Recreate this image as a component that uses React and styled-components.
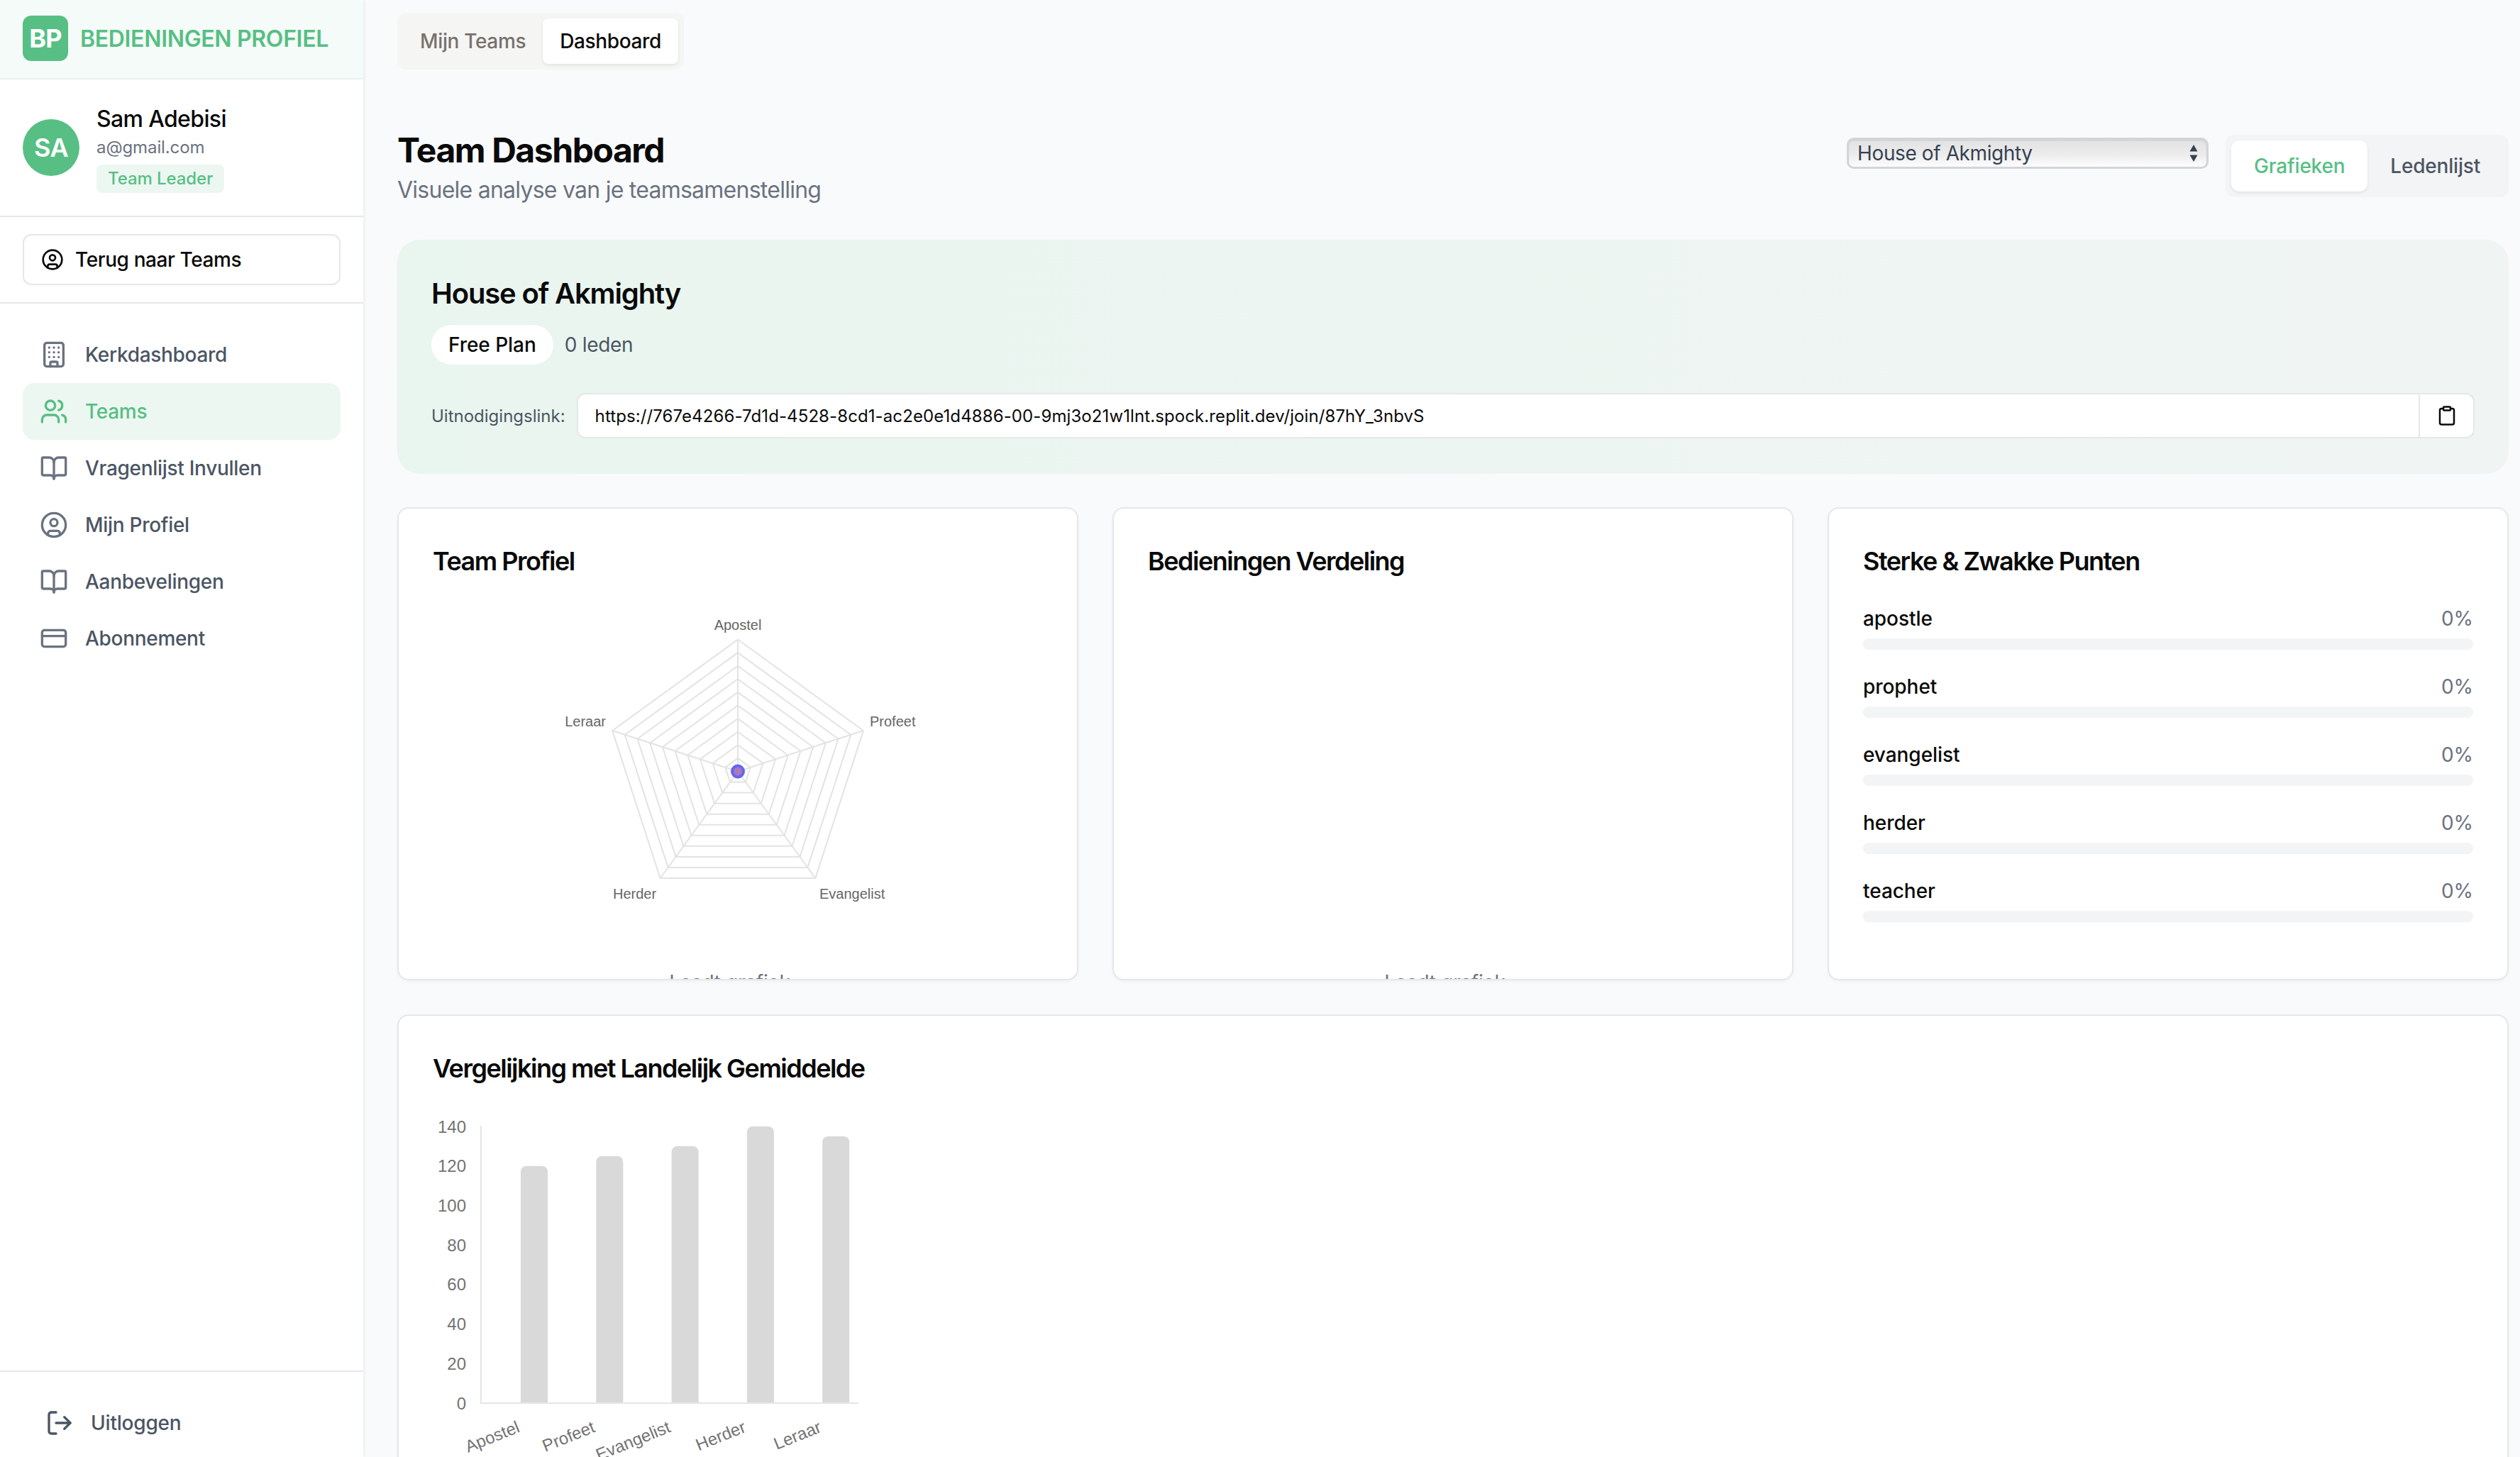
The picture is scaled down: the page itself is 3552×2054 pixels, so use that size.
import React from "react";
import styled, { createGlobalStyle } from "styled-components";
import { Building, Users, BookOpen, CircleUser, CreditCard, LogOut, Clipboard } from "lucide-react";

const Global = createGlobalStyle`
  html, body { margin: 0; padding: 0; height: 100%; }
  body { font-family: Inter, "Noto Sans", sans-serif; background: #f9fafb; color: #0a0a0a; overflow: hidden; }
  * { box-sizing: border-box; }
`;

const Shell = styled.div`display: flex; height: 100vh; overflow: hidden; background: #f9fafb;`;
const Sidebar = styled.aside`
  width: 512px; flex: none; height: 100%; display: flex; flex-direction: column; background: #fff;
  box-shadow: 2px 0 4px rgba(0,0,0,.05); position: relative; z-index: 1;
`;
const Brand = styled.div`
  height: 112px; flex: none; display: flex; align-items: center; gap: 17px; padding: 0 32px 2px;
  background: #f5fbf8; border-bottom: 2px solid #eceeef;
`;
const BrandMark = styled.div`
  width: 64px; height: 64px; border-radius: 12px; background: #57bf84; color: #fff;
  display: flex; align-items: center; justify-content: center; font-size: 36px; font-weight: 700;
  letter-spacing: -0.8px;
`;
const BrandName = styled.div`color: #57bf84; font-size: 32px; font-weight: 600; white-space: nowrap; letter-spacing: -0.33px;`;
const UserBlock = styled.div`
  display: flex; align-items: center; gap: 24px; padding: 32px; border-bottom: 2px solid #e5e7eb;
`;
const Avatar = styled.div`
  width: 80px; height: 80px; border-radius: 50%; background: #57bf84; color: #fff; flex: none;
  display: flex; align-items: center; justify-content: center; font-size: 36px; font-weight: 600; letter-spacing: -0.5px;
`;
const UserInfo = styled.div`display: flex; flex-direction: column; align-items: flex-start;`;
const UserName = styled.div`font-size: 32px; line-height: 48px; font-weight: 450; letter-spacing: -0.65px;`;
const UserMail = styled.div`font-size: 24px; line-height: 32px; color: #6b7280; letter-spacing: -0.1px;`;
const RoleBadge = styled.div`
  margin-top: 8px; height: 40px; padding: 0 16px; border-radius: 8px; background: #edf7f2; color: #57bf84;
  font-size: 24px; line-height: 40px; font-weight: 450; letter-spacing: -0.1px;
`;
const BackWrap = styled.div`padding: 24px 32px; border-bottom: 2px solid #e5e7eb;`;
const BackButton = styled.button`
  width: 100%; height: 72px; padding: 0 24px; display: flex; align-items: center; gap: 16px;
  background: #fff; border: 2px solid #e5e7eb; border-radius: 12px; color: #0a0a0a;
  font: 500 28px Inter, sans-serif; letter-spacing: -0.4px;
`;
const Nav = styled.nav`flex: 1; display: flex; flex-direction: column; padding: 32px 32px 0;`;
const NavItem = styled.div`
  height: 80px; padding: 0 24px; display: flex; align-items: center; gap: 24px; border-radius: 16px;
  font-size: 28px; font-weight: 450; letter-spacing: -0.3px;
  background: ${p => (p.$active ? "#edf7f2" : "transparent")};
  color: ${p => (p.$active ? "#57bf84" : "#4b5563")};
  svg { color: ${p => (p.$active ? "#57bf84" : "#6b7280")}; flex: none; }
`;
const Foot = styled.div`padding: 32px 32px 8px; border-top: 2px solid #e5e7eb;`;
const Logout = styled.div`
  height: 80px; padding: 0 32px; display: flex; align-items: center; gap: 24px;
  font-size: 28px; font-weight: 450; color: #4b5563; letter-spacing: -0.2px;
`;

const Main = styled.main`flex: 1; min-width: 0; height: 100%; padding: 18px 16px 0 48px; overflow: hidden;`;
const TopTabs = styled.div`
  display: inline-flex; padding: 8px; border-radius: 12px; background: #f5f5f4; vertical-align: top;
`;
const TopTab = styled.div`
  height: 64px; padding: 0 24px; display: flex; align-items: center; border-radius: 8px;
  font-size: 28px; font-weight: 450; letter-spacing: -0.35px;
  background: ${p => (p.$active ? "#fff" : "transparent")};
  color: ${p => (p.$active ? "#0c0a09" : "#78716c")};
  box-shadow: ${p => (p.$active ? "0 2px 4px rgba(0,0,0,.08)" : "none")};
`;
const Head = styled.header`
  margin-top: 84px; margin-bottom: 47px; display: flex; justify-content: space-between; align-items: flex-start;
`;
const Title = styled.h1`margin: 0; font-size: 48px; line-height: 60px; font-weight: 700; letter-spacing: -1.45px;`;
const Sub = styled.p`margin: 3px 0 0; font-size: 32px; line-height: 46px; color: #6b7280; letter-spacing: -0.75px;`;
const Controls = styled.div`display: flex; align-items: flex-start; gap: 24px; margin-top: 8px;`;
const SelectWrap = styled.div`position: relative; width: 510px; margin-top: 4px;`;
const NativeSelect = styled.select`
  appearance: none; width: 100%; height: 44px; padding: 0 12px; display: block;
  border: 3px solid #d3d5da; border-radius: 10px; color: #374151;
  background: linear-gradient(#e2e2e2, #ececec 55%, #fdfdfd);
  box-shadow: inset 0 1px 2px rgba(0,0,0,.1);
  font: 400 28px Inter, sans-serif; letter-spacing: -0.4px;
`;
const SelectArrows = styled.svg`position: absolute; right: 14px; top: 9px; pointer-events: none;`;
const Segment = styled.div`display: flex; padding: 8px; border-radius: 12px; background: #f3f4f6;`;
const SegmentItem = styled.div`
  height: 72px; padding: 0 32px; display: flex; align-items: center; border-radius: 12px;
  font-size: 28px; font-weight: 450; letter-spacing: -0.2px;
  background: ${p => (p.$active ? "#fff" : "transparent")};
  color: ${p => (p.$active ? "#57bf84" : "#4b5563")};
  box-shadow: ${p => (p.$active ? "0 2px 4px rgba(0,0,0,.07)" : "none")};
`;
const TeamCard = styled.section`
  height: 330px; padding: 48px; border-radius: 32px; margin-bottom: 47px;
  background: linear-gradient(90deg, #e9f5ef, #f0f5f3);
`;
const TeamName = styled.h2`margin: 0; font-size: 40px; line-height: 56px; font-weight: 600; letter-spacing: -1.15px;`;
const PlanRow = styled.div`margin-top: 16px; display: flex; align-items: center; gap: 16px;`;
const PlanPill = styled.span`
  height: 56px; padding: 0 24px; display: flex; align-items: center; border-radius: 28px; background: #fff;
  font-size: 28px; font-weight: 450; letter-spacing: -0.05px;
`;
const Members = styled.span`font-size: 28px; color: #4b5563; letter-spacing: -0.3px;`;
const LinkRow = styled.div`margin-top: 40px; display: flex; align-items: center; gap: 16px;`;
const LinkLabel = styled.span`font-size: 24px; font-weight: 400; color: #4b5563; white-space: nowrap;`;
const LinkBox = styled.div`
  flex: 1; height: 64px; display: flex; background: #fff; border: 2px solid #e5e7eb; border-radius: 12px; overflow: hidden;
`;
const LinkText = styled.div`
  flex: 1; padding: 0 24px; display: flex; align-items: center; font-size: 24px; font-weight: 400; color: #0a0a0a;
  letter-spacing: 0.1px;
`;
const CopyButton = styled.div`
  width: 77px; flex: none; border-left: 2px solid #e5e7eb; display: flex; align-items: center; justify-content: center;
`;
const Grid = styled.div`display: grid; grid-template-columns: repeat(3, 1fr); gap: 48px; margin-bottom: 48px;`;
const Card = styled.section`
  height: ${p => p.$h}px; padding: 48px; background: #fff; border: 2px solid #e5e7eb; border-radius: 16px; overflow: hidden;
  box-shadow: 0 2px 4px rgba(0,0,0,.04);
`;
const CardTitle = styled.h3`
  margin: -2px 0 2px; font-size: 36px; line-height: 56px; font-weight: 600; letter-spacing: -1.5px;
`;
const ChartSlot = styled.div`height: 544px;`;
const Loading = styled.div`text-align: center; font-size: 28px; line-height: 40px; color: #6b7280; letter-spacing: -0.3px;`;
const Meters = styled.div`margin-top: 33px; display: flex; flex-direction: column; gap: 32px;`;
const MeterHead = styled.div`display: flex; justify-content: space-between; font-size: 28px; line-height: 40px; font-weight: 450; letter-spacing: -0.05px;`;
const MeterValue = styled.span`color: #6b7280; font-weight: 400;`;
const MeterTrack = styled.div`margin-top: 8px; height: 16px; border-radius: 8px; background: #f3f4f6;`;
const BlockSvg = styled.svg`display: block;`;

const RCX = 430, RCY = 266.5;
const pt = (i, r) => {
  const a = (-90 + i * 72) * Math.PI / 180;
  return [RCX + r * Math.cos(a), RCY + r * Math.sin(a)];
};
function Radar() {
  const rings = Array.from({ length: 10 }, (_, i) => (i + 1) * 18.6);
  return (
    <BlockSvg width="860" height="544">
      {rings.map(r => (
        <polygon key={r} points={[0,1,2,3,4].map(i => pt(i, r).join(",")).join(" ")} fill="none" stroke="#e3e3e3" strokeWidth="2" />
      ))}
      {[0,1,2,3,4].map(i => {
        const [x, y] = pt(i, 186);
        return <line key={i} x1={RCX} y1={RCY} x2={x} y2={y} stroke="#e3e3e3" strokeWidth="2" />;
      })}
      <circle cx={RCX} cy={RCY} r="8" fill="#ab77bd" stroke="#6366f1" strokeWidth="4" />
      <g fontFamily="'Liberation Sans', sans-serif" fontSize="20" fill="#666">
        <text x="430" y="67" textAnchor="middle">Apostel</text>
        <text x="616" y="203">Profeet</text>
        <text x="545" y="446">Evangelist</text>
        <text x="254" y="446">Herder</text>
        <text x="244" y="203" textAnchor="end">Leraar</text>
      </g>
    </BlockSvg>
  );
}

const bars = [["Apostel",120],["Profeet",125],["Evangelist",130],["Herder",140],["Leraar",135]];
function BarChart() {
  const y0 = 442, k = 390 / 140;
  return (
    <BlockSvg width="640" height="560">
      <g fontFamily="'Liberation Sans', sans-serif" fontSize="24" fill="#737373">
        {[0,20,40,60,80,100,120,140].map(v => (
          <text key={v} x="47" y={y0 - v * k + 8.5} textAnchor="end">{v}</text>
        ))}
        {bars.map(([n, v], i) => {
          const x = 124 + i * 106.3;
          const top = y0 - v * k;
          return (
            <React.Fragment key={n}>
              <path d={`M${x} ${y0}V${top + 8}a8 8 0 0 1 8 -8h22a8 8 0 0 1 8 8V${y0}Z`} fill="#d9d9d9" />
              <text x={x} y={y0 + 40} textAnchor="end" transform={`rotate(-22 ${x} ${y0 + 40})`}>{n}</text>
            </React.Fragment>
          );
        })}
      </g>
      <line x1="68" y1="51" x2="68" y2={y0} stroke="#e5e5e5" strokeWidth="2" />
      <line x1="67" y1={y0} x2="600" y2={y0} stroke="#e5e5e5" strokeWidth="2" />
    </BlockSvg>
  );
}

const navItems = [
  [Building, "Kerkdashboard"], [Users, "Teams", true], [BookOpen, "Vragenlijst Invullen"],
  [CircleUser, "Mijn Profiel"], [BookOpen, "Aanbevelingen"], [CreditCard, "Abonnement"],
];
const meters = ["apostle", "prophet", "evangelist", "herder", "teacher"];

export default function App() {
  return (
    <Shell>
      <Global />
      <Sidebar>
        <Brand><BrandMark>BP</BrandMark><BrandName>BEDIENINGEN PROFIEL</BrandName></Brand>
        <UserBlock>
          <Avatar>SA</Avatar>
          <UserInfo>
            <UserName>Sam Adebisi</UserName>
            <UserMail>a@gmail.com</UserMail>
            <RoleBadge>Team Leader</RoleBadge>
          </UserInfo>
        </UserBlock>
        <BackWrap>
          <BackButton><CircleUser size={32} />Terug naar Teams</BackButton>
        </BackWrap>
        <Nav>
          {navItems.map(([Icon, label, active]) => (
            <NavItem key={label} $active={active}><Icon size={40} />{label}</NavItem>
          ))}
        </Nav>
        <Foot><Logout><LogOut size={40} />Uitloggen</Logout></Foot>
      </Sidebar>
      <Main>
        <TopTabs>
          <TopTab>Mijn Teams</TopTab>
          <TopTab $active>Dashboard</TopTab>
        </TopTabs>
        <Head>
          <div>
            <Title>Team Dashboard</Title>
            <Sub>Visuele analyse van je teamsamenstelling</Sub>
          </div>
          <Controls>
            <SelectWrap>
              <NativeSelect defaultValue="a"><option value="a">House of Akmighty</option></NativeSelect>
              <SelectArrows width="14" height="26" viewBox="0 0 14 26">
                <path d="M7 1l5.5 9.5h-11zM7 25l5.5-9.5h-11z" fill="#374151" />
              </SelectArrows>
            </SelectWrap>
            <Segment>
              <SegmentItem $active>Grafieken</SegmentItem>
              <SegmentItem>Ledenlijst</SegmentItem>
            </Segment>
          </Controls>
        </Head>
        <TeamCard>
          <TeamName>House of Akmighty</TeamName>
          <PlanRow><PlanPill>Free Plan</PlanPill><Members>0 leden</Members></PlanRow>
          <LinkRow>
            <LinkLabel>Uitnodigingslink:</LinkLabel>
            <LinkBox>
              <LinkText>https://767e4266-7d1d-4528-8cd1-ac2e0e1d4886-00-9mj3o21w1lnt.spock.replit.dev/join/87hY_3nbvS</LinkText>
              <CopyButton><Clipboard size={30} /></CopyButton>
            </LinkBox>
          </LinkRow>
        </TeamCard>
        <Grid>
          <Card $h={667}>
            <CardTitle>Team Profiel</CardTitle>
            <ChartSlot><Radar /></ChartSlot>
            <Loading>Laadt grafiek...</Loading>
          </Card>
          <Card $h={667}>
            <CardTitle>Bedieningen Verdeling</CardTitle>
            <ChartSlot />
            <Loading>Laadt grafiek...</Loading>
          </Card>
          <Card $h={667}>
            <CardTitle>Sterke &amp; Zwakke Punten</CardTitle>
            <Meters>
              {meters.map(m => (
                <div key={m}>
                  <MeterHead><span>{m}</span><MeterValue>0%</MeterValue></MeterHead>
                  <MeterTrack />
                </div>
              ))}
            </Meters>
          </Card>
        </Grid>
        <Card $h={720}>
          <CardTitle>Vergelijking met Landelijk Gemiddelde</CardTitle>
          <BarChart />
        </Card>
      </Main>
    </Shell>
  );
}
